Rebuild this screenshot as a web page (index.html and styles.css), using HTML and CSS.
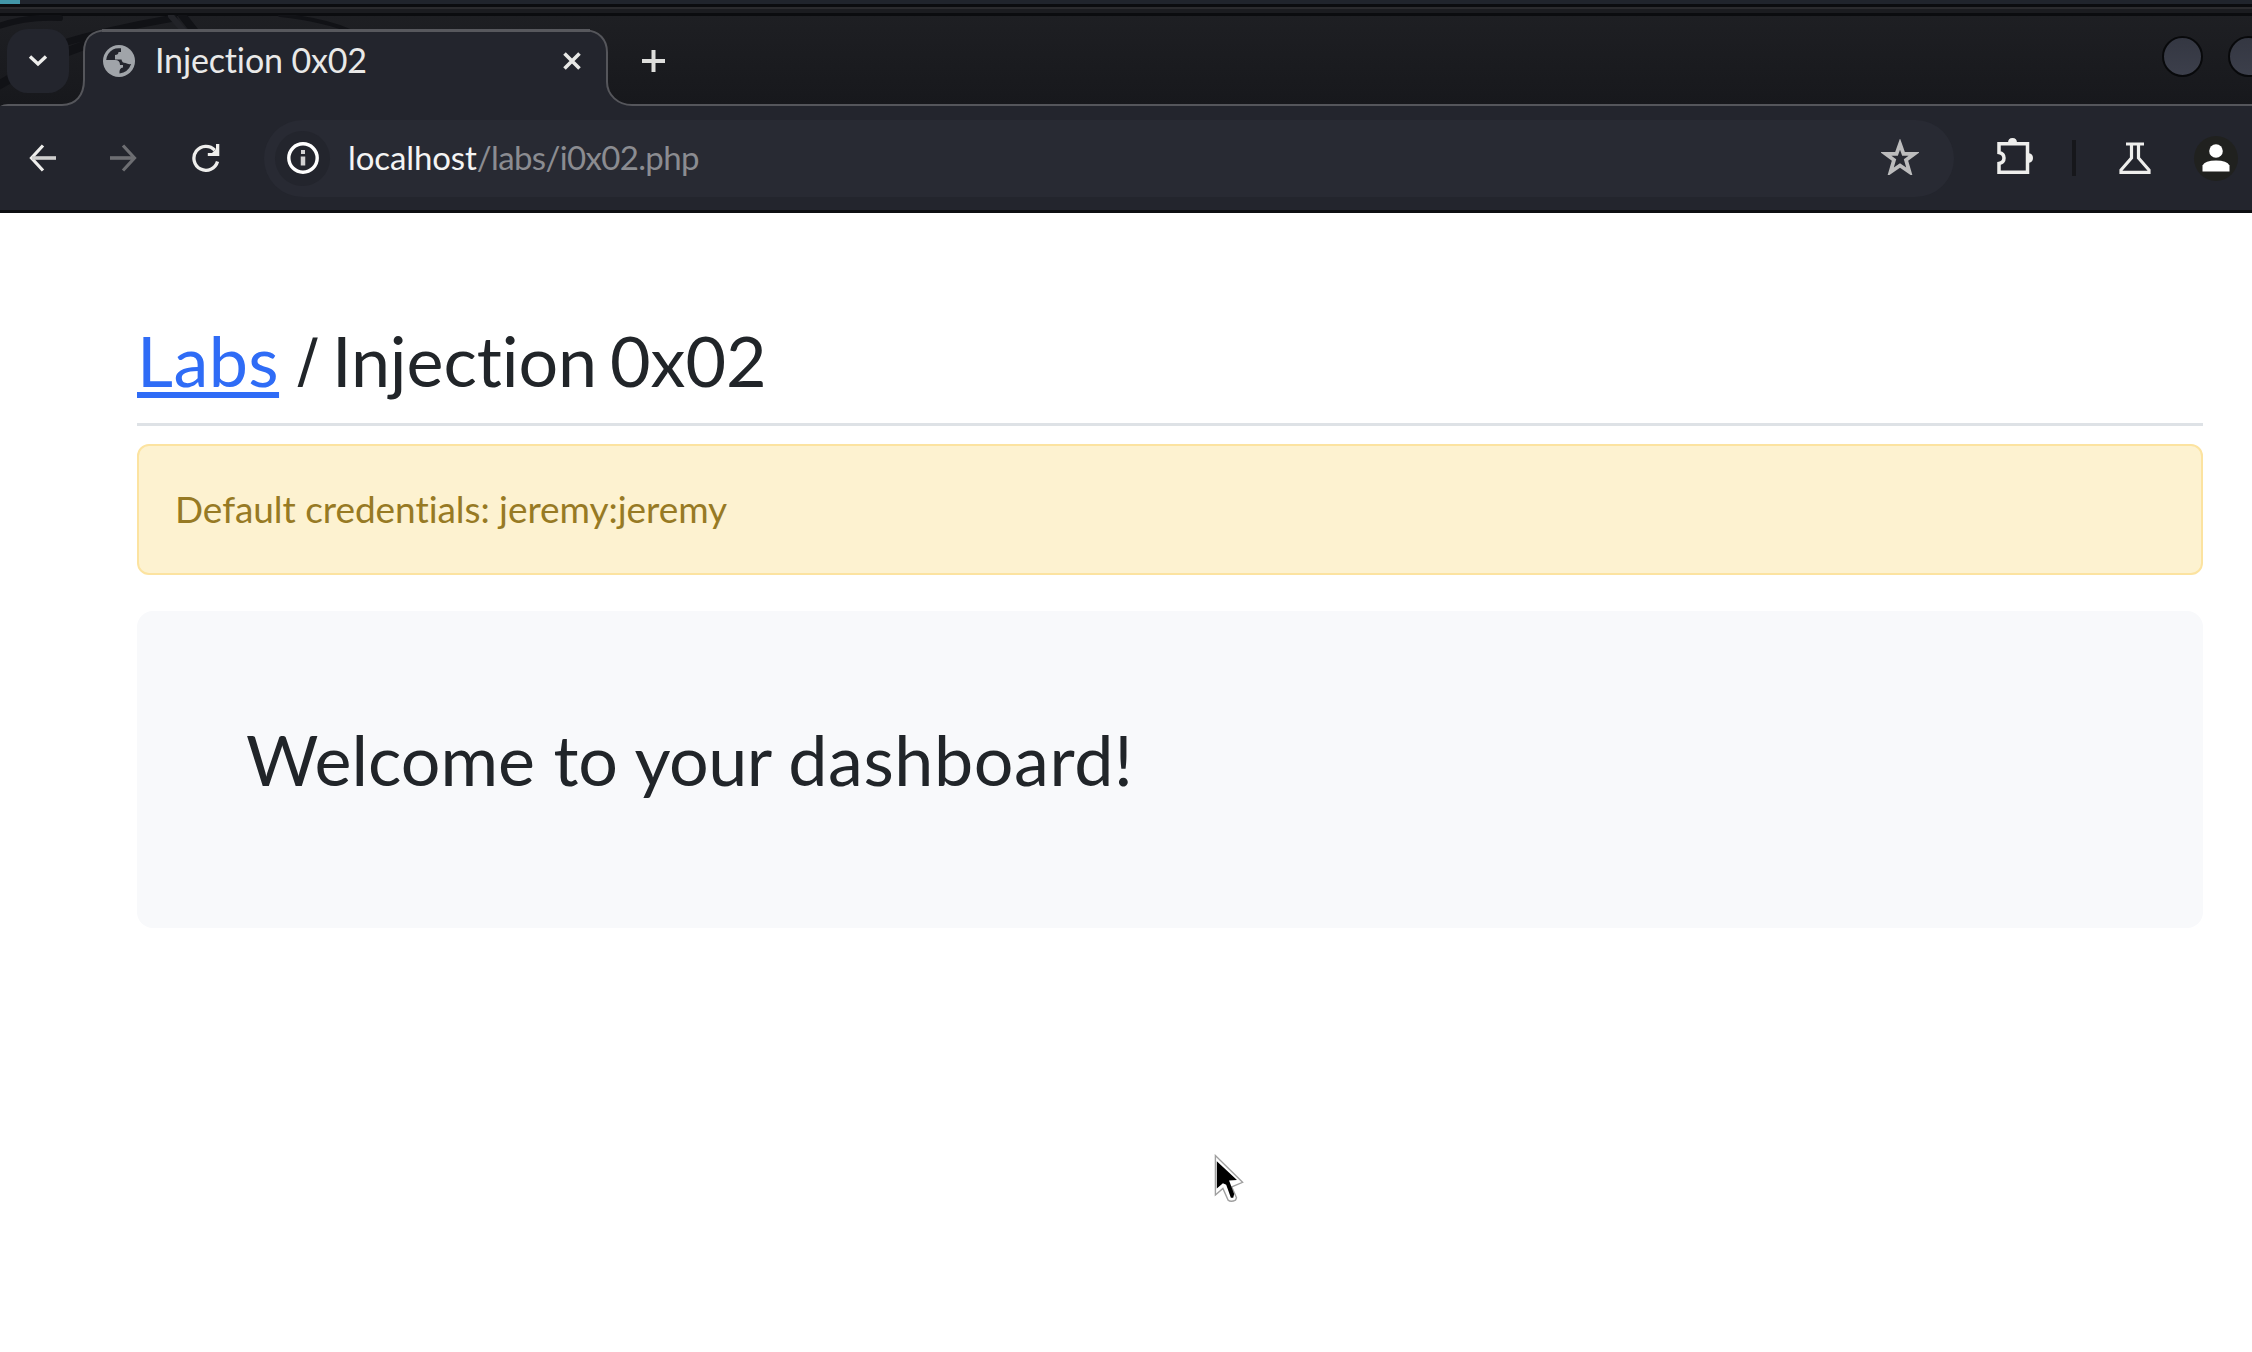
FILE: index.html
```html
<!DOCTYPE html>
<html lang="en">
<head>
<meta charset="utf-8">
<title>Injection 0x02</title>
<link rel="stylesheet" href="styles.css">
</head>
<body>
<header class="browser">
  <div class="desktop-edge"><span class="accent"></span></div>
  <div class="tabstrip">
    <svg class="tab-shape" width="2252" height="91" viewBox="0 15 2252 91" aria-hidden="true">
      <g fill="none" stroke="#111216" stroke-linecap="round">
        <path d="M-4 27Q26 16 60 18" stroke-width="6"/>
        <path d="M60 44Q110 29 174 18" stroke-width="7"/>
        <path d="M-6 88Q36 62 88 44" stroke-width="9"/>
        <path d="M182 15L196 33" stroke-width="8"/>
        <path d="M171 16L184 31" stroke="#222328" stroke-width="6"/>
        <path d="M280 15Q325 20 350 31" stroke-width="4"/>
      </g>
      <path d="M-2 120V109Q2 105 8 105H62C76 105 84 95 84 80V52C84 38 92 30.5 106 30.5H586C599 30.5 607 40 607 52V82C607 95 618 105 632 105H2256V120Z" fill="#23252d"/>
      <path d="M-2 109Q2 105 8 105H62C76 105 84 95 84 80V52C84 38 92 30.5 106 30.5M586 30.5C599 30.5 607 40 607 52V82C607 95 618 105 632 105H2256" fill="none" stroke="#55565b" stroke-width="2"/>
      <path d="M102 30.5H590" stroke="#57585d" stroke-width="3"/>
    </svg>
    <div class="tab-search">
      <svg width="20" height="14" viewBox="0 0 20 14"><path d="M2 2.5L10 10L18 2.5" fill="none" stroke="#eeeeec" stroke-width="3.4"/></svg>
    </div>
    <div class="tab">
      <svg width="32" height="32" viewBox="0 0 32 32">
        <circle cx="16" cy="16" r="16" fill="#a0a4a9"/>
        <path d="M10 4.5Q4 8 3.2 15H12Q17 15 17 20H20V22.5Q16 23 16.5 28.5Q25 27.500 28.200 19Q25 19.500 22.500 18Q19 18 18.500 14.500H12V10Q15.500 10 15.500 7H18V3.300Q13 2.700 10 4.500Z" fill="#23252d"/>
      </svg>
      <span class="tab-title">Injection 0x02</span>
      <svg class="tab-close" width="18" height="18" viewBox="0 0 18 18"><path d="M1.500 1.500L16.500 16.500M16.500 1.500L1.500 16.500" stroke="#e8e8e6" stroke-width="3.600"/></svg>
    </div>
    <svg class="new-tab" width="23" height="22" viewBox="0 0 23 22"><path d="M0 11H23M11.500 0V22" stroke="#dededc" stroke-width="4"/></svg>
    <div class="window-buttons"><span class="win-btn"></span><span class="win-btn"></span></div>
  </div>
  <nav class="toolbar">
    <svg class="back" width="28" height="28" viewBox="0 0 28 28"><path d="M14 1.500L2.500 14L14 26.500" fill="none" stroke="#eeeeec" stroke-width="3.200"/><path d="M3 14H27" stroke="#cfcfce" stroke-width="3.600"/></svg>
    <svg class="forward" width="28" height="28" viewBox="0 0 28 28"><path d="M13 1.500L24.500 14L13 26.500" fill="none" stroke="#6d6e72" stroke-width="3.200"/><path d="M0 14H24" stroke="#6d6e72" stroke-width="3.600"/></svg>
    <svg class="reload" width="28" height="28" viewBox="0 0 28 28"><path d="M22.800 6.200A12 12 0 1 0 25.500 17.500" fill="none" stroke="#eeeeec" stroke-width="3.300"/><path d="M27.300 0V12H15.800V9H20L24 5V0Z" fill="#eeeeec"/></svg>
    <div class="omnibox">
      <div class="site-info">
        <svg width="32" height="32" viewBox="0 0 32 32"><circle cx="16" cy="16" r="14.200" fill="none" stroke="#fff" stroke-width="3.400"/><path d="M16 14.500V23.500" stroke="#d2d2d3" stroke-width="4.500"/><path d="M16 8V12" stroke="#d2d2d3" stroke-width="4"/></svg>
      </div>
      <div class="url"><span class="host">localhost</span><span class="path">/labs/i0x02.php</span></div>
      <svg class="star" width="38" height="36" viewBox="0 0 38 36"><path d="M19 5L22.500 14.800H33.500L25 21L28.500 33L19 26.500L9.500 33L13 21L4.500 14.800H15.500Z" fill="none" stroke="#bcbcbd" stroke-width="3.800"/></svg>
    </div>
    <svg class="extensions" width="36" height="36" viewBox="0 0 36 36"><path d="M2 5.800H30.500V34.200H2V25.500Q7 24.500 7 20Q7 15.500 2 14.500Z" fill="none" stroke="#eeeeec" stroke-width="3.500"/><path d="M11 5Q11 0 15.500 0Q20 0 20 5ZM31 15Q36 15.500 36 20Q36 24.500 31 25Z" fill="#eeeeec"/></svg>
    <span class="divider"></span>
    <svg class="labs" width="32" height="32" viewBox="0 0 32 32"><path d="M7 2H25M12.500 2V16L2 28V30.400H30V28L19.500 16V2" fill="none" stroke="#eeeeec" stroke-width="3.200"/></svg>
    <div class="profile">
      <svg width="28" height="28" viewBox="0 0 28 28"><circle cx="14" cy="7" r="6.800" fill="#fff"/><path d="M.5 27.500V21.500Q3 16.500 14 16.500Q25 16.500 27.500 21.500V27.500Z" fill="#fff"/></svg>
    </div>
  </nav>
</header>
<main class="page">
  <h1 class="breadcrumb"><a class="crumb-link" href="#">Labs</a> <span class="slash">/</span> <span class="crumb-name">Injection</span> <span>0x02</span></h1>
  <div class="alert">Default credentials: jeremy:jeremy</div>
  <section class="card"><h2 class="welcome">Welcome to <span class="tight">your</span> <span class="last">dashboard!</span></h2></section>
</main>
<svg class="cursor" width="30" height="50" viewBox="0 0 32 52" aria-hidden="true">
  <path d="M1.500 1V43L9.500 36L15 48.500Q18 51 23 48.500L24 46L19 34.500L30.500 29.500Z" fill="#fff" stroke="#a0a0a0" stroke-width="1.500"/>
  <path d="M3 7V36L9.500 30.500L13 32L18 46H20.500L21.500 42L17 30L16 27.500L24.500 27Z" fill="#000"/>
</svg>
</body>
</html>
```
FILE: styles.css
```css
* { box-sizing: border-box; }

body {
  margin: 0;
  width: 2252px;
  height: 1352px;
  overflow: hidden;
  background: #fff;
  color: #212529;
  font-family: Lato, "Open Sans", sans-serif;
  font-variant-ligatures: none;
}

svg { display: block; flex: none; }

h1, h2 {
  margin: 0;
  font-size: 70px;
  font-weight: 400;
  line-height: 84px;
  white-space: nowrap;
}

/* Browser window */
.browser {
  height: 213px;
  background: #23252d;
  border-bottom: 3px solid #0d0e11;
}

.desktop-edge {
  height: 16px;
  background: linear-gradient(#20242c 4px, #0b0c0f 4px 7px, #2b2b2e 7px 9px, #1b1c20 9px 13px, #0b0c0f 13px);
}

.accent {
  display: block;
  width: 20px;
  height: 4px;
  background: #4296a8;
}

.tabstrip {
  position: relative;
  display: flex;
  align-items: flex-start;
  height: 90px;
  padding: 13px 0 0 7px;
  background: linear-gradient(#1e1f23, #17181c);
}

.tab-shape {
  position: absolute;
  left: 0;
  top: -1px;
}

.tab-search, .tab, .new-tab, .window-buttons { position: relative; }

.tab-search {
  display: flex;
  align-items: center;
  justify-content: center;
  width: 62px;
  height: 64px;
  border-radius: 21px;
  background: #23252d;
}

.tab {
  display: flex;
  align-items: center;
  width: 523px;
  height: 64px;
  margin-left: 15px;
  padding: 0 26px 0 19px;
}

.tab-title {
  flex: 1;
  margin: -3px 0 0 20px;
  color: #e9e9e8;
  font-size: 34px;
  line-height: 42px;
  letter-spacing: -0.15px;
}

.new-tab { margin: 21px 0 0 35px; }

.window-buttons {
  display: flex;
  gap: 25px;
  margin: 7px -17px 0 auto;
}

.win-btn {
  width: 41px;
  height: 41px;
  border: 2px solid #08090b;
  border-radius: 50%;
  background: linear-gradient(#343742, #3c3f4b);
}

.toolbar {
  display: flex;
  align-items: center;
  height: 104px;
  padding-left: 29px;
}

.forward { margin-left: 53px; }
.reload { margin-left: 54px; }

.omnibox {
  display: flex;
  align-items: center;
  width: 1690px;
  height: 77px;
  margin-left: 44px;
  padding: 0 35px 0 11px;
  border-radius: 39px;
  background: #282a33;
}

.site-info {
  display: flex;
  align-items: center;
  justify-content: center;
  width: 55px;
  height: 55px;
  border-radius: 50%;
  background: #23252d;
}

.url {
  flex: 1;
  margin: -2px 0 0 18px;
  font-size: 33px;
  line-height: 40px;
}

.host { color: #f4f4f4; letter-spacing: -0.1px; }
.path { color: #8b8c91; letter-spacing: -0.65px; }
.star { margin-top: -3px; }
.extensions { margin: -4px 0 0 43px; }

.divider {
  width: 4px;
  height: 36px;
  margin-left: 39px;
  background: #16171b;
}

.labs { margin-left: 43px; }

.profile {
  display: flex;
  align-items: center;
  justify-content: center;
  width: 44px;
  height: 45px;
  margin-left: 43px;
  border-radius: 50%;
  background: #20211f;
}

/* Page content */
.page { padding: 105px 49px 0 137px; }

.breadcrumb {
  height: 108px;
  border-bottom: 3px solid #dee2e6;
}

.crumb-link {
  color: #2f6cf6;
  letter-spacing: 0.45px;
  text-decoration-thickness: 6px;
  text-underline-offset: 5px;
  text-decoration-skip-ink: none;
}

.slash {
  display: inline-block;
  margin-right: -9px;
  font-family: "Noto Sans", sans-serif;
  line-height: 1;
  transform: scaleX(0.82);
  transform-origin: left;
}

.crumb-name { margin-right: -5px; letter-spacing: -0.1px; }

.alert {
  height: 131px;
  margin-top: 18px;
  padding: 0 36px;
  border: 2px solid #fce3a0;
  border-radius: 12px;
  background: #fdf2d0;
  color: #977a24;
  font-size: 37px;
  line-height: 125px;
  letter-spacing: -0.05px;
}

.card {
  height: 317px;
  margin-top: 36px;
  padding: 106px 109px;
  border-radius: 16px;
  background: #f8f9fb;
}

.welcome { word-spacing: 0.5px; }
.tight { margin: 0 -2px; letter-spacing: -0.5px; }
.last { letter-spacing: 0.6px; }

/* Pointer */
.cursor {
  position: absolute;
  left: 1214px;
  top: 1154px;
}
```
